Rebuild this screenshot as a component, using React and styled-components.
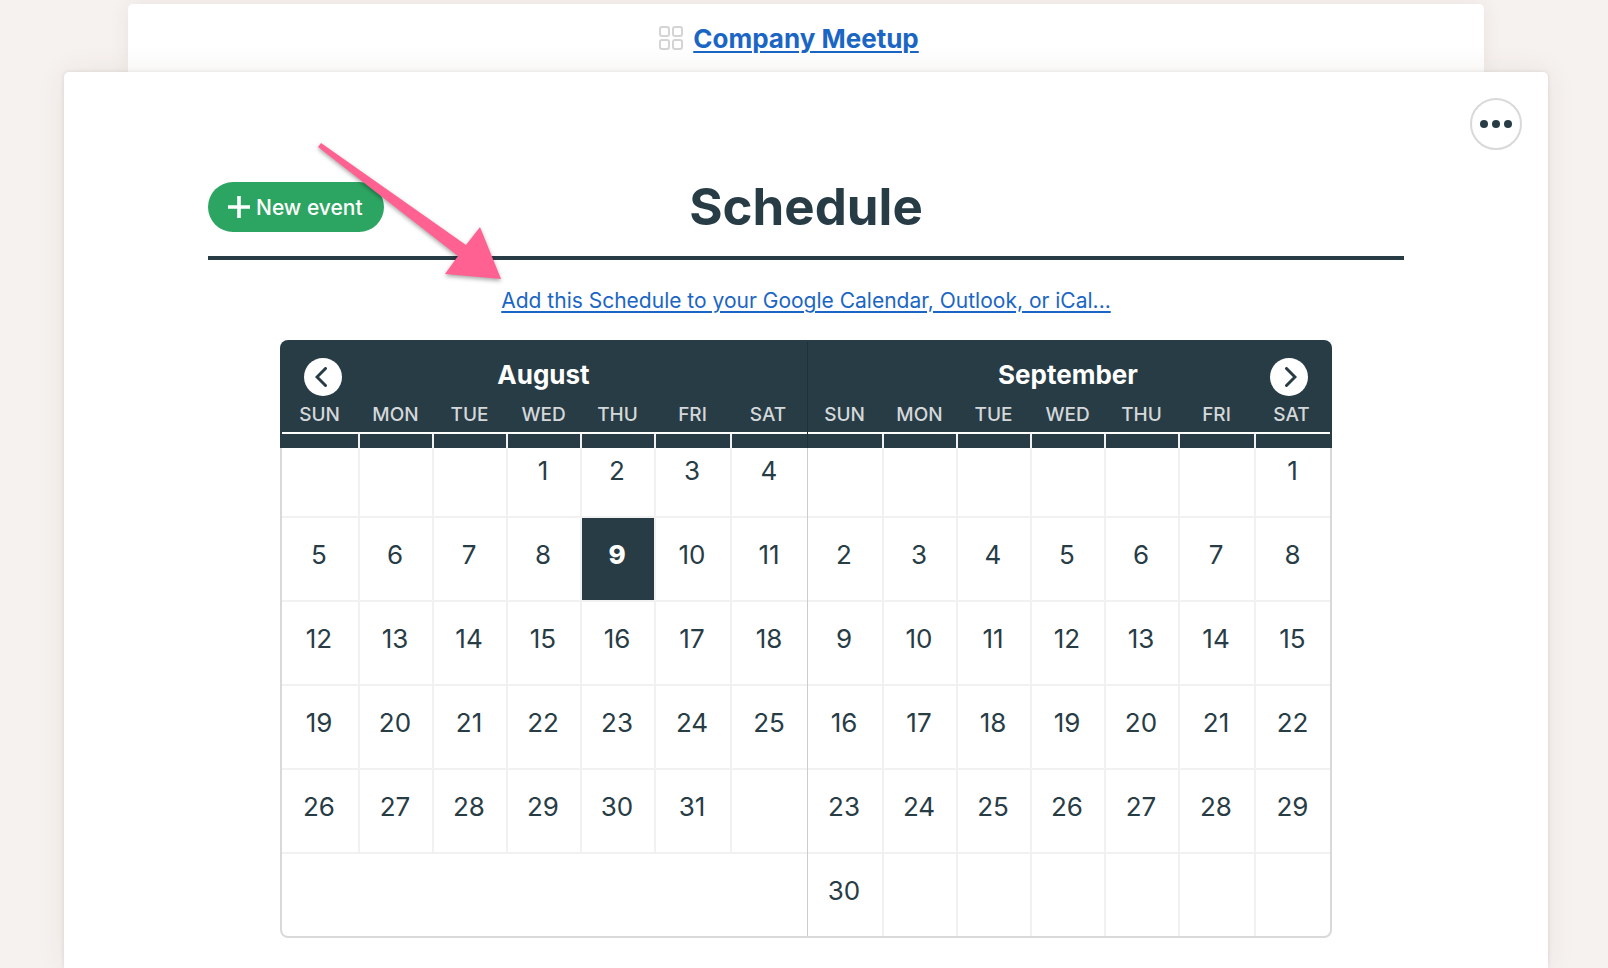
import React from 'react';
import styled, { createGlobalStyle } from 'styled-components';

const dark = '#283c46';
const blue = '#1b66c4';
const line = '#f1f1f1';

const GlobalStyle = createGlobalStyle`
	* {
		box-sizing: border-box;
	}
	body {
		margin: 0;
		background: #f6f2f0;
		color: ${dark};
		font-family: Inter, 'Liberation Sans', sans-serif;
	}
`;

const Page = styled.div`
	display: flex;
	flex-direction: column;
	min-height: 100vh;
	padding: 4px 60px 0 64px;
	overflow: hidden;
`;
const ProjectBar = styled.nav`
	display: flex;
	align-items: center;
	justify-content: center;
	gap: 10px;
	height: 68px;
	margin: 0 64px;
	padding-right: 34px;
	background: #fff;
	border-radius: 5px 5px 0 0;
	box-shadow: 0 0 20px rgba(90, 50, 30, 0.08);
`;
const ProjectLink = styled.a`
	padding-top: 2px;
	color: ${blue};
	font-size: 26px;
	font-weight: 700;
	line-height: 34px;
	text-decoration-thickness: 2px;
	text-underline-offset: 3px;
`;
const Sheet = styled.main`
	position: relative;
	flex: 1;
	padding: 104px 144px 30px;
	background: #fff;
	border-radius: 5px 5px 0 0;
	box-shadow: 0 0 4px rgba(60, 40, 30, 0.12), 0 0 30px rgba(90, 50, 30, 0.08);
`;
const MoreButton = styled.button`
	position: absolute;
	top: 26px;
	right: 26px;
	display: flex;
	align-items: center;
	justify-content: center;
	width: 52px;
	height: 52px;
	padding: 0;
	border: 2px solid #d9d9d9;
	border-radius: 50%;
	background: #fff;
`;
const Header = styled.header`
	position: relative;
	display: grid;
	grid-template-columns: 1fr auto 1fr;
	align-items: center;
	padding-bottom: 18px;
	border-bottom: 4px solid ${dark};
`;
const NewEvent = styled.button`
	justify-self: start;
	display: flex;
	align-items: center;
	gap: 6px;
	height: 50px;
	padding: 0 21px 0 20px;
	border: 0;
	border-radius: 25px;
	background: #2da562;
	color: #fff;
	font-family: inherit;
	font-size: 21px;
	font-weight: 500;
`;
const Title = styled.h1`
	margin: 0;
	font-size: 51px;
	font-weight: 700;
	line-height: 62px;
`;
const Arrow = styled.svg`
	position: absolute;
	top: -44px;
	left: 96px;
	overflow: visible;
	pointer-events: none;
	filter: drop-shadow(0 2px 2px rgba(0, 0, 0, 0.35));
`;
const Subscribe = styled.p`
	margin: 26px 0 25px;
	font-size: 21px;
	line-height: 29px;
	text-align: center;
`;
const SubscribeLink = styled.a`
	color: ${blue};
	text-decoration-thickness: 2px;
	text-underline-offset: 3px;
`;
const Calendar = styled.section`
	position: relative;
	display: grid;
	grid-template-columns: 526fr 522fr;
	max-width: 1052px;
	margin: 0 auto;
	border: 2px solid transparent;
	border-radius: 8px;
	background: linear-gradient(${dark} 108px, #d9d9d9 108px) border-box;
	overflow: hidden;
`;
const Month = styled.div`
	background: linear-gradient(${dark} 106px, #fff 106px) border-box;
	&:first-child {
		border-right: 1px solid rgba(0, 0, 0, 0.2);
	}
`;
const MonthTable = styled.table`
	width: 100%;
	table-layout: fixed;
	border-collapse: separate;
	border-spacing: 0;
`;
const MonthName = styled.caption`
	padding: 16px 2px 6px 0;
	color: #fff;
	font-size: 26px;
	font-weight: 700;
	line-height: 34px;
`;
const Weekday = styled.th`
	height: 36px;
	padding: 0 3px 0 0;
	border-bottom: 2px solid #fff;
	color: #d4d8da;
	font-size: 19px;
	font-weight: 500;
	line-height: 34px;
`;
const Day = styled.td`
	height: 84px;
	padding: 21px 2px 0 0;
	border-right: 2px solid ${line};
	border-bottom: 2px solid ${line};
	background: ${({ $today }) => ($today ? dark : 'transparent')};
	background-clip: padding-box;
	color: ${({ $today }) => ($today ? '#fff' : dark)};
	font-size: 26px;
	font-weight: ${({ $today }) => ($today ? 800 : 400)};
	line-height: 32px;
	text-align: center;
	vertical-align: top;
	&:last-child {
		padding-right: 1px;
		border-right: 0;
	}
`;
const NavButton = styled.button`
	position: absolute;
	top: 16px;
	${({ $side }) => $side}: 22px;
	display: flex;
	align-items: center;
	justify-content: center;
	width: 38px;
	height: 38px;
	padding: 0;
	border: 0;
	border-radius: 50%;
	background: #fff;
`;

const weekdays = ['SUN', 'MON', 'TUE', 'WED', 'THU', 'FRI', 'SAT'];

const months = [
	{ name: 'August', start: 3, days: 31, today: 9, cols: [78, 74, 74, 74, 74, 76, 75] },
	{ name: 'September', start: 6, days: 30, cols: [76, 74, 74, 74, 74, 76, 74] },
];

const getWeeks = (start, days) => {
	const count = Math.ceil((start + days) / 7);
	return Array.from({ length: count }, (_, week) =>
		weekdays.map((_, i) => {
			const day = week * 7 + i - start + 1;
			return day > 0 && day <= days ? day : null;
		})
	);
};

const Col = styled.col`
	width: ${({ $w }) => $w}px;
`;

const WeekRow = styled.tr`
	${({ $last }) => $last && `td { border-bottom: 0; height: 82px; }`}
`;

const CalendarMonth = ({ month }) => {
	const weeks = getWeeks(month.start, month.days);
	return (
		<Month>
			<MonthTable>
				<MonthName>{month.name}</MonthName>
				<colgroup>
					{month.cols.map((w, i) => (
						<Col key={i} $w={w} />
					))}
				</colgroup>
				<thead>
					<tr>
						{weekdays.map((name) => (
							<Weekday key={name} scope='col'>
								{name}
							</Weekday>
						))}
					</tr>
				</thead>
				<tbody>
					{weeks.map((week, w) => (
						<WeekRow key={w} $last={w === 5}>
							{week.map((day, i) => (
								<Day key={i} $today={day !== null && day === month.today}>
									{day}
								</Day>
							))}
						</WeekRow>
					))}
				</tbody>
			</MonthTable>
		</Month>
	);
};

const App = () => {
	return (
		<>
			<GlobalStyle />
			<Page>
				<ProjectBar>
					<svg width='24' height='24' fill='none' stroke='#d4d4d4' strokeWidth='2'>
						<rect x='1' y='1' width='9' height='9' rx='2' />
						<rect x='14' y='1' width='9' height='9' rx='2' />
						<rect x='1' y='14' width='9' height='9' rx='2' />
						<rect x='14' y='14' width='9' height='9' rx='2' />
					</svg>
					<ProjectLink href='#project'>Company Meetup</ProjectLink>
				</ProjectBar>
				<Sheet>
					<MoreButton aria-label='More options'>
						<svg width='32' height='8' fill={dark}>
							<circle cx='4' cy='4' r='4' />
							<circle cx='16' cy='4' r='4' />
							<circle cx='28' cy='4' r='4' />
						</svg>
					</MoreButton>
					<Header>
						<NewEvent>
							<svg width='22' height='22' stroke='#fff' strokeWidth='3.6'>
								<path d='M11 0v22M0 11h22' />
							</svg>
							New event
						</NewEvent>
						<Title>Schedule</Title>
						<Arrow width='210' height='160' fill='#ff6292'>
							<path d='M17 11L162 113L176 95L197 147L141 142L154 124L14 15Z' />
						</Arrow>
					</Header>
					<Subscribe>
						<SubscribeLink href='#subscribe'>
							Add this Schedule to your Google Calendar, Outlook, or iCal...
						</SubscribeLink>
					</Subscribe>
					<Calendar>
						{months.map((month) => (
							<CalendarMonth key={month.name} month={month} />
						))}
						<NavButton $side='left' aria-label='Previous month'>
							<svg width='16' height='20' fill='none' stroke={dark} strokeWidth='3' strokeLinecap='round'>
								<path d='M10.5 1.5L2 10L10.5 18.5' />
							</svg>
						</NavButton>
						<NavButton $side='right' aria-label='Next month'>
							<svg width='16' height='20' fill='none' stroke={dark} strokeWidth='3' strokeLinecap='round'>
								<path d='M5.5 1.5L14 10L5.5 18.5' />
							</svg>
						</NavButton>
					</Calendar>
				</Sheet>
			</Page>
		</>
	);
};

export default App;
